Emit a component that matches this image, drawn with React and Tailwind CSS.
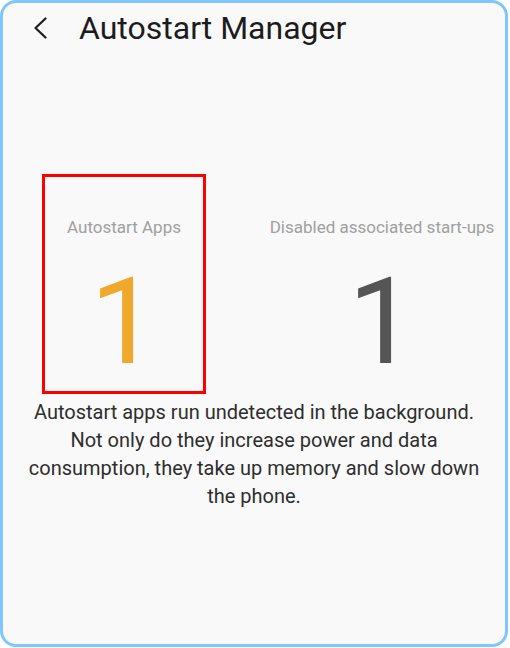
import React from "react";

const Stat = ({ label, value, color }) => (
  <>
    <span className="text-[17px] leading-[20px] text-[#a0a0a0] whitespace-nowrap">{label}</span>
    <span className={`mt-[25px] text-[121px] leading-[121px] ${color}`}>{value}</span>
  </>
);

const App = () => {
  return (
    <div className="w-[510px] h-[648px] bg-white" style={{ fontFamily: "Roboto, 'Liberation Sans', sans-serif" }}>
      <div className="w-[508px] h-[647px] border-[3px] border-[#80c6fa] rounded-[16px] bg-[#f9f9f9] flex flex-col">
        {/* Header */}
        <div className="flex items-center pt-[6px] pl-[30px]">
          <svg width="14" height="22" viewBox="0 0 14 22" fill="none">
            <path d="M12.5 1.5 L2.5 11 L12.5 20.5" stroke="#1c1c1c" strokeWidth="2.2" strokeLinecap="round" strokeLinejoin="round" />
          </svg>
          <h1 className="ml-[32px] text-[32px] leading-[38px] text-[#1c1c1c]">Autostart Manager</h1>
        </div>

        {/* Counters */}
        <div className="flex mt-[127px] gap-[17px]">
          <div className="w-[242px] flex justify-center">
            <div className="w-[164px] h-[220px] border-[3px] border-[#ff0000] flex flex-col items-center pt-[40px]">
              <Stat label="Autostart Apps" value="1" color="text-[#f0a82c]" />
            </div>
          </div>
          <div className="w-[240px] flex flex-col items-center pt-[43px]">
            <Stat label="Disabled associated start-ups" value="1" color="text-[#555555]" />
          </div>
        </div>

        {/* Description */}
        <p className="mt-[4px] px-[18px] text-center text-[20px] leading-[28px] text-[#2e2e2e]">
          Autostart apps run undetected in the background. Not only do they increase power and data consumption, they take up memory and slow down the phone.
        </p>
      </div>
    </div>
  );
};

export default App;
